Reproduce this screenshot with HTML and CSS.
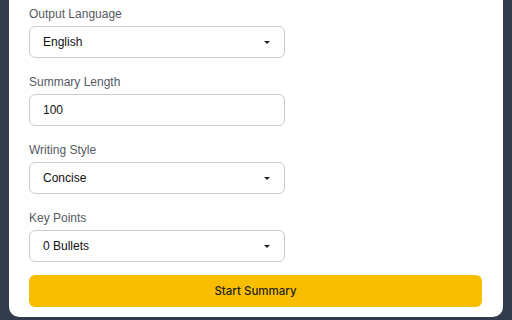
FILE: index.html
```html
<!DOCTYPE html>
<html>
<head>
<meta charset="utf-8">
<link rel="stylesheet" href="styles.css">
</head>
<body>
<div class="card">
  <div class="field">
    <label class="label">Output Language</label>
    <div class="control select"><span>English</span><span class="caret"></span></div>
  </div>
  <div class="field">
    <label class="label">Summary Length</label>
    <div class="control"><span>100</span></div>
  </div>
  <div class="field">
    <label class="label">Writing Style</label>
    <div class="control select"><span>Concise</span><span class="caret"></span></div>
  </div>
  <div class="field">
    <label class="label">Key Points</label>
    <div class="control select"><span>0 Bullets</span><span class="caret"></span></div>
  </div>
  <button class="btn">Start Summary</button>
</div>
</body>
</html>
```
FILE: styles.css
```css
html, body {
  margin: 0;
  height: 100%;
  background: #313b4c;
}
body {
  padding: 0 9px 0 9px;
  box-sizing: border-box;
  font-family: "Liberation Sans", Arial, sans-serif;
  overflow: hidden;
}
.card {
  background: #fff;
  border-radius: 0 0 10px 10px;
  padding: 6px 21px 10px 20px;
  height: 317px;
  box-sizing: border-box;
  display: flex;
  flex-direction: column;
}
.field {
  display: flex;
  flex-direction: column;
  gap: 4px;
  margin-bottom: 16px;
}
.field:last-of-type {
  margin-bottom: 13px;
}
.label {
  font-size: 12px;
  line-height: 16px;
  color: #555a61;
}
.control {
  width: 256px;
  height: 32px;
  box-sizing: border-box;
  border: 1px solid #c9cdd3;
  border-radius: 6px;
  display: flex;
  align-items: center;
  justify-content: space-between;
  padding: 0 14px 0 13px;
  font-size: 12px;
  color: #111;
}
.caret {
  width: 0;
  height: 0;
  border-left: 3px solid transparent;
  border-right: 3px solid transparent;
  border-top: 3.5px solid #222;
}
.btn {
  height: 32px;
  border: none;
  border-radius: 6px;
  background: #fabe00;
  color: #1f1f1f;
  font-family: Inter, "Liberation Sans", sans-serif;
  font-size: 11.5px;
  font-weight: 500;
  width: 100%;
}
```
